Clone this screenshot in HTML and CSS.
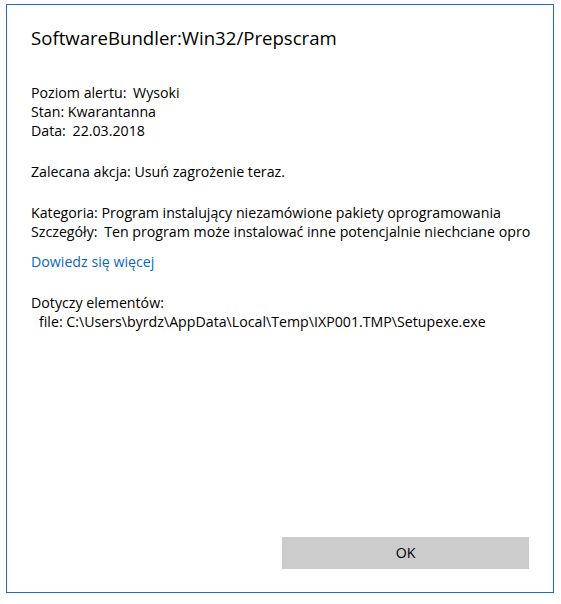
FILE: index.html
```html
<!DOCTYPE html>
<html lang="pl">
<head>
  <meta charset="UTF-8" />
  <title>SoftwareBundler:Win32/Prepscram</title>
  <link rel="stylesheet" href="styles.css">
</head>
<body>
  <div class="dialog">
    <h1 class="title">SoftwareBundler:Win32/Prepscram</h1>

    <div class="group">
      <div class="line">Poziom alertu: <span class="value">Wysoki</span></div>
      <div class="line">Stan: Kwarantanna</div>
      <div class="line">Data: <span class="value">22.03.2018</span></div>
    </div>

    <div class="group">
      <div class="line">Zalecana akcja: Usuń zagrożenie teraz.</div>
    </div>

    <div class="group">
      <div class="line">Kategoria: Program instalujący niezamówione pakiety oprogramowania</div>
      <div class="line">Szczegóły: <span class="value">Ten program może instalować inne potencjalnie niechciane opro</span></div>
    </div>

    <a class="more" href="#">Dowiedz się więcej</a>

    <div class="group">
      <div class="line">Dotyczy elementów:</div>
      <div class="line indent">file: C:\Users\byrdz\AppData\Local\Temp\IXP001.TMP\Setupexe.exe</div>
    </div>

    <button class="ok">OK</button>
  </div>
</body>
</html>
```

FILE: styles.css
```css
:root {
  --accent: #1f6fbd;
  --link: #0a67c2;
  --font: 'Open Sans', 'Noto Sans', sans-serif;
}

body {
  margin: 0;
  background: #fff;
  font-family: var(--font);
  color: #000;
}

.dialog {
  box-sizing: border-box;
  width: 548px;
  height: 589px;
  margin: 4px 0 0 6px;
  border: 1px solid var(--accent);
  padding: 19px 24px 23px 24px;
  display: flex;
  flex-direction: column;
  overflow: hidden;
}

.title {
  margin: 0 0 31px;
  font-size: 18.6px;
  font-weight: 400;
  line-height: 28px;
}

.group {
  margin-bottom: 22px;
}

.line {
  font-size: 14.2px;
  line-height: 19px;
  white-space: nowrap;
}

.value {
  margin-left: 3px;
}

.indent {
  padding-left: 8px;
}

.more {
  display: block;
  font-size: 14.2px;
  line-height: 19px;
  color: var(--link);
  text-decoration: none;
  margin: -11px 0 22px;
}

.ok {
  margin-top: auto;
  align-self: flex-end;
  width: 247px;
  height: 32px;
  border: none;
  background: #ccc;
  font-family: var(--font);
  font-size: 14.2px;
  color: #000;
  padding: 0 0 2px;
}
```
